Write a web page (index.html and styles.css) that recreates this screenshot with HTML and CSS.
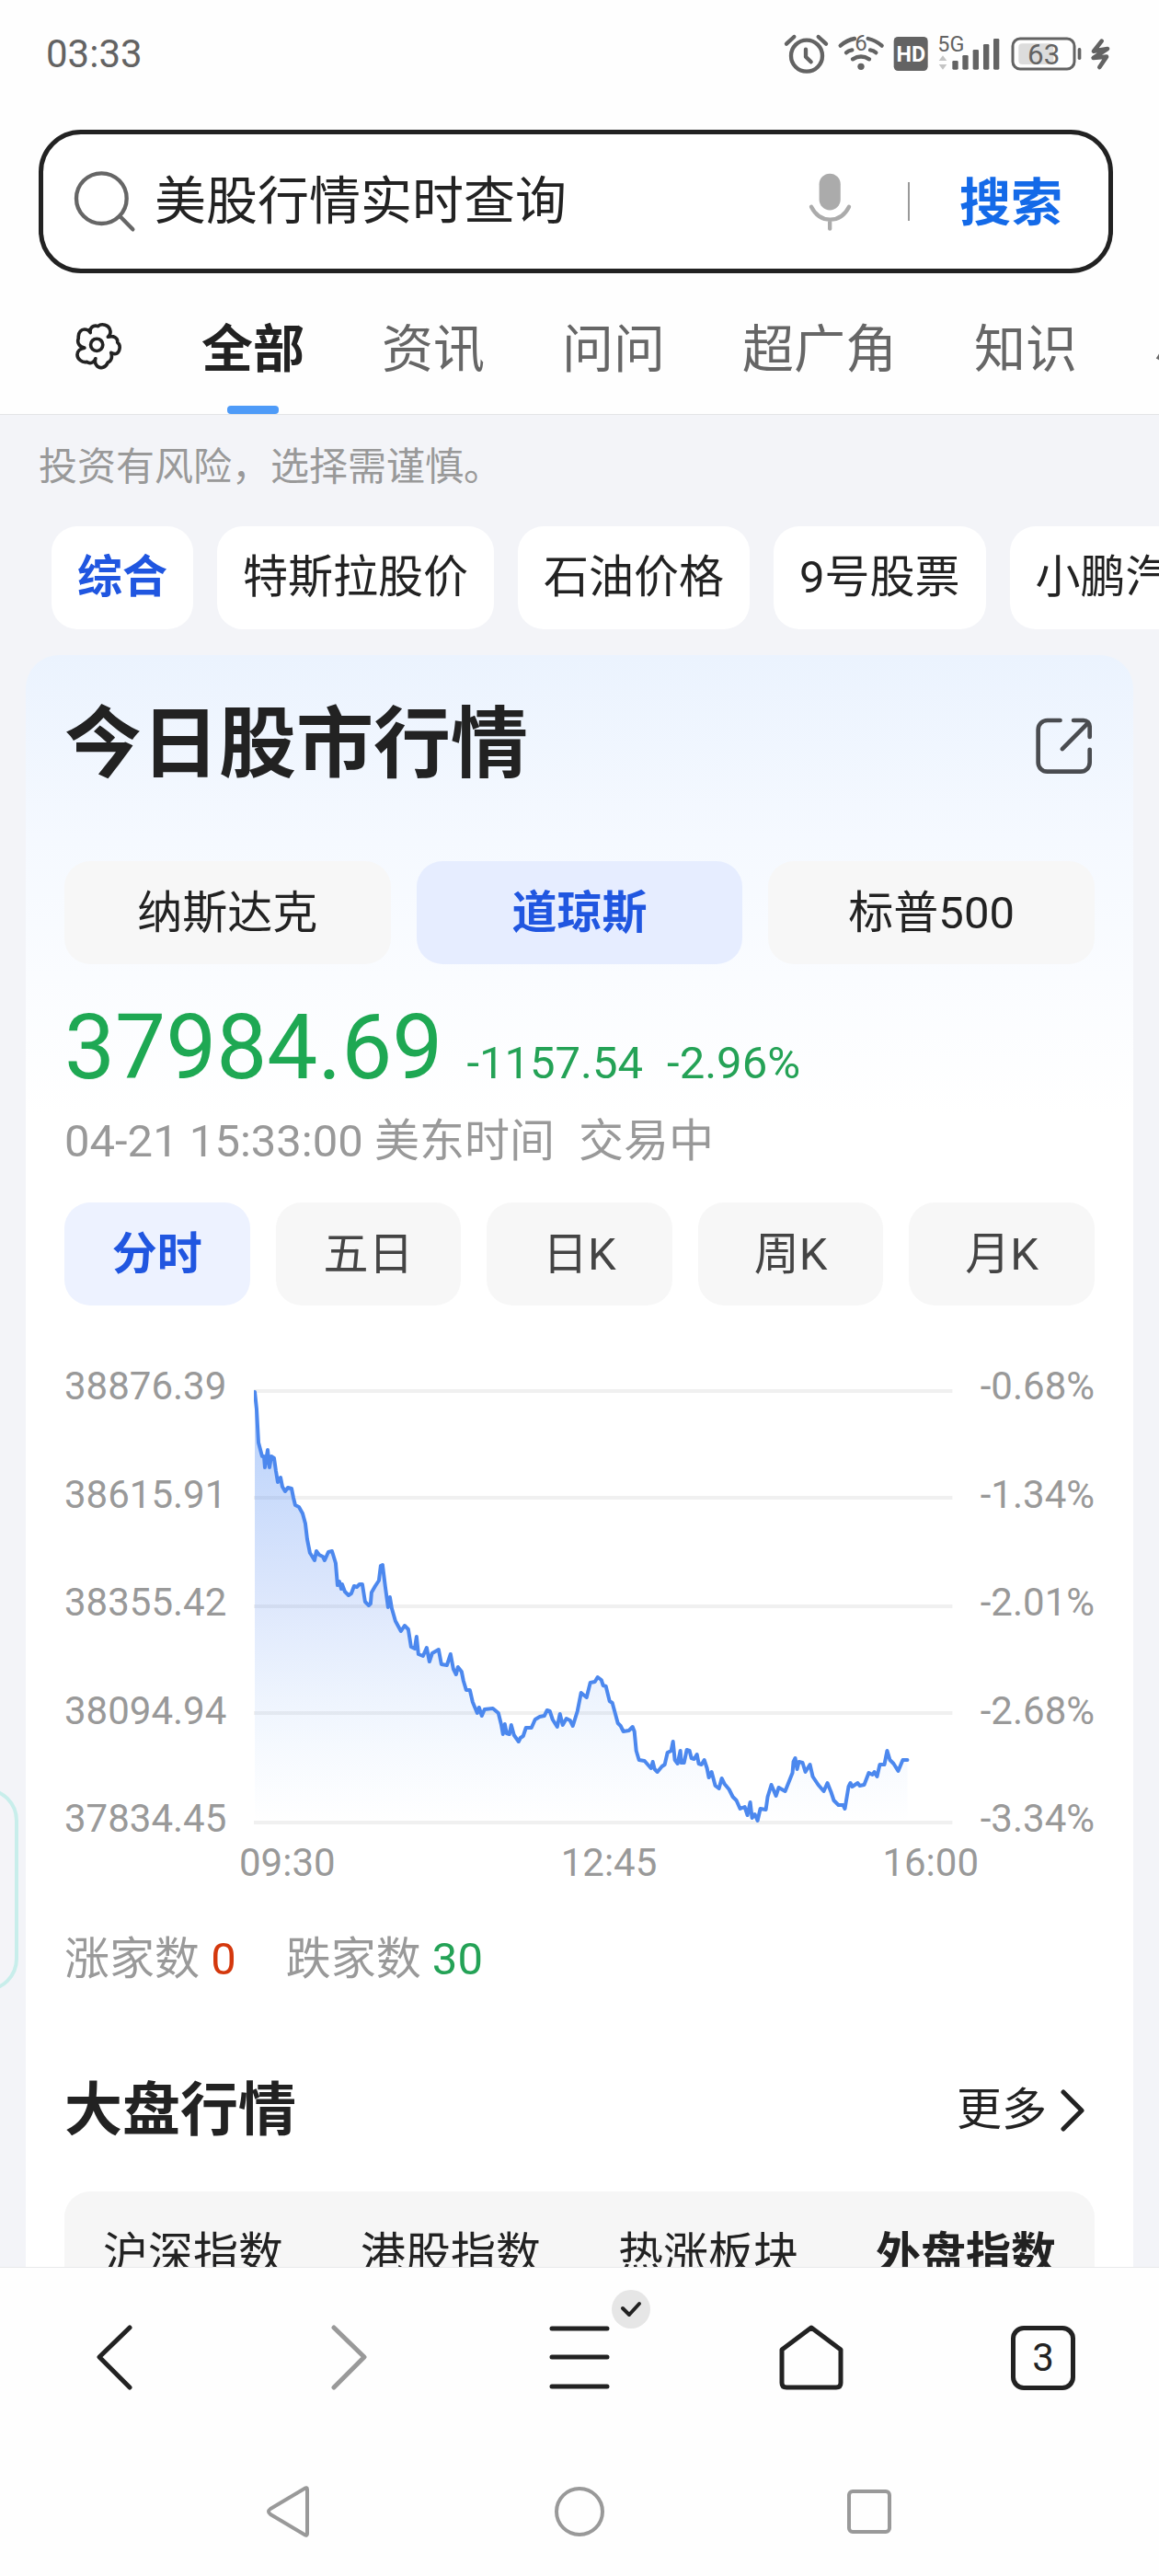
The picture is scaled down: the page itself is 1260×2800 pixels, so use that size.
FILE: index.html
```html
<!DOCTYPE html>
<html lang="zh-CN">
<head>
  <meta charset="UTF-8" />
  <title>美股行情实时查询</title>
  <meta name="viewport" content="width=device-width, initial-scale=1" />
  <link rel="stylesheet" href="styles.css">
</head>
<body>
  <!-- Status bar -->
  <div class="status-bar">
    <span class="clock">03:33</span>
    <div class="status-icons">
      <svg width="48" height="44" viewBox="108 48 144 132" fill="none" stroke="#636363" stroke-width="13" stroke-linecap="round" stroke-linejoin="round">
        <circle cx="180" cy="119" r="51" />
        <path d="M177 98v24l17 17M114 80l25-23M243 80l-25-23" />
      </svg>
      <svg width="50" height="44" viewBox="274 48 150 132" fill="none" stroke="#636363" stroke-width="13" stroke-linecap="round">
        <path d="M282 86Q304 67 328 63M372 63Q396 68 417 86M301 109Q308 102 320 100M379 100Q391 102 398 109M322 130Q349 113 376 130" />
        <circle cx="349" cy="154" r="11" fill="#636363" stroke="none" />
        <text x="349" y="103" font-size="72" fill="#636363" stroke="none" text-anchor="middle">6</text>
      </svg>
      <svg width="38" height="44" viewBox="457 48 114 132">
        <rect x="459" y="57" width="111" height="111" rx="14" fill="#636363" />
        <text x="515" y="137" font-size="70" font-weight="700" fill="#fff" text-anchor="middle">HD</text>
      </svg>
      <svg width="68" height="44" viewBox="608 48 204 132" fill="#636363">
        <text x="609" y="104" font-size="70">5G</text>
        <path d="M626 118l13 17h-26zM613 147h26l-13 17z" fill="#c4c4c4" />
        <rect x="657" y="135" width="19" height="29" rx="4" />
        <rect x="690" y="117" width="19" height="47" rx="4" />
        <rect x="724" y="99" width="19" height="65" rx="4" />
        <rect x="758" y="81" width="19" height="83" rx="4" />
        <rect x="791" y="63" width="19" height="101" rx="4" />
      </svg>
      <svg class="battery" width="77" height="44" viewBox="848 48 231 132">
        <rect x="854" y="63" width="201" height="99" rx="24" fill="none" stroke="#636363" stroke-width="9" />
        <rect x="873" y="79" width="114" height="68" rx="12" fill="#dcdcdc" />
        <rect x="1066" y="93" width="11" height="39" rx="5" fill="#636363" />
        <text x="955" y="148" font-size="94" fill="#636363" text-anchor="middle">63</text>
      </svg>
      <svg width="21" height="44" viewBox="1100 48 63 132" fill="none" stroke="#636363" stroke-width="14" stroke-linecap="round" stroke-linejoin="round">
        <path d="M1135 71l-26 33 45-8-46 30 43-4-23 34" />
      </svg>
    </div>
  </div>

  <!-- Search -->
  <form class="search-box">
    <svg class="search-icon" viewBox="120 168 204 204" fill="none" stroke="#666" stroke-width="13" stroke-linecap="round">
      <circle cx="211" cy="260" r="82" />
      <path d="M271 318l42 43" />
    </svg>
    <input class="search-input" type="text" value="美股行情实时查询" aria-label="搜索内容">
    <button class="mic-btn" type="button" aria-label="语音">
      <svg width="47" height="65" viewBox="86 172 142 196">
        <rect x="121" y="177" width="70" height="120" rx="35" fill="#ababab" />
        <path d="M95 286Q116 328 157 328T219 286M156 330v28" fill="none" stroke="#ababab" stroke-width="13" stroke-linecap="round" />
      </svg>
    </button>
    <span class="divider"></span>
    <button class="search-btn" type="button">搜索</button>
  </form>

  <!-- Category tabs -->
  <nav class="tabs">
    <button class="tab-settings" aria-label="设置">
      <svg width="53" height="53" viewBox="120 662 160 160" fill="none" stroke="#222" stroke-width="11" stroke-linejoin="round">
        <path d="M175 700C172 684 184 674 200 679C212 668 236 674 240 692C242 700 240 708 233 714C252 708 266 718 264 732C276 740 272 762 262 768C256 771 250 770 243 766C248 780 244 794 232 798C226 816 204 820 196 808C190 802 190 792 192 785C188 798 174 804 164 796C148 800 132 786 132 772C132 760 142 752 156 750C140 748 130 734 136 718C134 698 146 686 162 690C168 691 172 695 175 700Z" />
        <circle cx="196" cy="740" r="20" />
      </svg>
    </button>
    <a class="tab active" href="#">全部</a>
    <a class="tab" href="#">资讯</a>
    <a class="tab" href="#">问问</a>
    <a class="tab" href="#">超广角</a>
    <a class="tab" href="#">知识</a>
    <a class="tab" href="#">小说</a>
  </nav>

  <!-- Results -->
  <main class="results">
    <p class="notice">投资有风险，选择需谨慎。</p>

    <div class="chips">
      <button class="chip active">综合</button>
      <button class="chip">特斯拉股价</button>
      <button class="chip">石油价格</button>
      <button class="chip">9号股票</button>
      <button class="chip">小鹏汽车</button>
    </div>

    <section class="card">
      <header class="card-head">
        <h1>今日股市行情</h1>
        <button class="share-btn" aria-label="分享">
          <svg width="63" height="63" viewBox="105 110 190 190" fill="none" stroke="#4a4c50" stroke-width="14" stroke-linecap="round">
            <path d="M188 122H146a30 30 0 0 0-30 30V260a30 30 0 0 0 30 30H255a30 30 0 0 0 30-30V218M232 122H265a20 20 0 0 1 20 20V176M278 132L195 216" />
          </svg>
        </button>
      </header>

      <div class="markets">
        <button class="pill">纳斯达克</button>
        <button class="pill active">道琼斯</button>
        <button class="pill">标普500</button>
      </div>

      <div class="quote">
        <span class="price">37984.69</span>
        <span class="change">-1157.54</span>
        <span class="change">-2.96%</span>
      </div>
      <div class="quote-time">
        <span>04-21 15:33:00 美东时间</span>
        <span>交易中</span>
      </div>

      <div class="periods">
        <button class="pill active">分时</button>
        <button class="pill">五日</button>
        <button class="pill">日K</button>
        <button class="pill">周K</button>
        <button class="pill">月K</button>
      </div>

      <div class="chart">
        <div class="axis-y">
          <span>38876.39</span>
          <span>38615.91</span>
          <span>38355.42</span>
          <span>38094.94</span>
          <span>37834.45</span>
        </div>
        <svg class="plot" viewBox="0 0 760 476" preserveAspectRatio="none">
          <defs>
            <linearGradient id="fade" x1="0" y1="0" x2="0" y2="1">
              <stop offset="0" stop-color="#4a8cf5" stop-opacity="0.4" />
              <stop offset="0.5" stop-color="#4a80f0" stop-opacity="0.18" />
              <stop offset="0.82" stop-color="#5a9bf5" stop-opacity="0.06" />
              <stop offset="1" stop-color="#5a9bf5" stop-opacity="0" />
            </linearGradient>
          </defs>
          <path d="M0 2H760M0 118H760M0 236H760M0 352H760M0 471H760" stroke="#f0f0f0" stroke-width="4" />
          <path id="area" fill="url(#fade)" />
          <path id="line" fill="none" stroke="#4c88ee" stroke-width="4" stroke-linejoin="round" stroke-linecap="round" />
        </svg>
        <div class="axis-y">
          <span>-0.68%</span>
          <span>-1.34%</span>
          <span>-2.01%</span>
          <span>-2.68%</span>
          <span>-3.34%</span>
        </div>
      </div>
      <div class="axis-x">
        <span>09:30</span>
        <span>12:45</span>
        <span>16:00</span>
      </div>

      <div class="counts">
        <span>涨家数 <b class="up">0</b></span>
        <span>跌家数 <b class="down">30</b></span>
      </div>

      <header class="sub-head">
        <h2>大盘行情</h2>
        <a class="more" href="#">更多
          <svg width="28" height="48" viewBox="0 0 28 48" fill="none" stroke="#222" stroke-width="5" stroke-linecap="round" stroke-linejoin="round">
            <path d="M4 4l20 20L4 44" />
          </svg>
        </a>
      </header>

      <div class="boards">
        <button class="board">沪深指数</button>
        <button class="board">港股指数</button>
        <button class="board">热涨板块</button>
        <button class="board active">外盘指数</button>
      </div>
    </section>

    <div class="side-handle"></div>
  </main>

  <!-- Browser toolbar -->
  <nav class="toolbar">
    <button aria-label="后退">
      <svg width="72" height="72" viewBox="0 0 72 72" fill="none" stroke="#222" stroke-width="5" stroke-linecap="round" stroke-linejoin="round"><path d="M51 3L18 35l33 33" /></svg>
    </button>
    <button aria-label="前进">
      <svg width="72" height="72" viewBox="0 0 72 72" fill="none" stroke="#999" stroke-width="5" stroke-linecap="round" stroke-linejoin="round"><path d="M21 3l33 32-33 33" /></svg>
    </button>
    <button class="menu-btn" aria-label="菜单">
      <svg width="72" height="72" viewBox="0 0 72 72" fill="none" stroke="#222" stroke-width="5" stroke-linecap="round"><path d="M6 4h60M6 35h60M6 67h60" /></svg>
      <span class="badge">
        <svg width="24" height="20" viewBox="0 0 24 20" fill="none" stroke="#222" stroke-width="4" stroke-linecap="round" stroke-linejoin="round"><path d="M3 9l7 7L21 4" /></svg>
      </span>
    </button>
    <button aria-label="主页">
      <svg width="72" height="72" viewBox="0 0 72 72" fill="none" stroke="#222" stroke-width="5" stroke-linejoin="round"><path d="M36 3L4 27v36q0 5 5 5h54q5 0 5-5V27z" /></svg>
    </button>
    <button aria-label="标签页"><span class="tab-count">3</span></button>
  </nav>

  <!-- System navigation -->
  <nav class="sys-nav">
    <button aria-label="返回">
      <svg width="56" height="56" viewBox="0 0 56 56" fill="none" stroke="#999" stroke-width="4" stroke-linejoin="round"><path d="M47 4v48q0 3-3 1L7 31q-4-3 0-6L44 3q3-2 3 1z" /></svg>
    </button>
    <button aria-label="桌面">
      <svg width="56" height="56" viewBox="0 0 56 56" fill="none" stroke="#999" stroke-width="4"><circle cx="28" cy="28" r="25" /></svg>
    </button>
    <button aria-label="最近任务">
      <svg width="56" height="56" viewBox="0 0 56 56" fill="none" stroke="#999" stroke-width="4"><rect x="6" y="6" width="44" height="44" rx="4" /></svg>
    </button>
  </nav>

  <script>
    // x,y pairs of the intraday curve, in plot units
    const points = [
      "1,3 3,22 5,58 9,73 11,73 12,85 15,66 17,85 19,73 22,75 24,89 26,101 29,96 31,106 34,111 37,107 41,108",
      "43,118 45,126 49,128 53,135 56,146 58,163 61,178 63,181 66,186 68,176 71,180 75,182 77,186 81,177 85,176",
      "89,189 91,213 93,209 95,217 96,212 99,220 103,224 106,222 109,214 112,215 115,212 118,212 121,231 125,235",
      "127,233 128,221 132,214 136,208 138,192 140,191 143,215 146,237 148,226 150,238 154,252 160,263 164,257",
      "168,261 171,280 175,282 177,269 179,288 184,290 188,281 191,296 194,287 201,283 204,299 210,300 214,288",
      "217,304 220,310 222,302 226,307 228,317 231,327 235,327 238,340 243,352 245,346 248,355 251,348 260,347",
      "266,352 269,364 271,375 273,364 275,374 278,375 280,365 283,376 288,383 290,379 293,377 296,368 302,368",
      "306,359 311,356 316,355 319,349 322,350 325,359 330,367 333,353 336,365 340,358 344,360 347,366 352,350",
      "356,330 362,335 366,319 371,318 374,313 378,316 380,322 383,323 387,339 390,341 396,363 399,366 402,372",
      "408,371 412,367 414,372 416,393 419,403 425,404 432,412 434,405 436,413 439,416 444,410 447,408 450,395",
      "454,393 456,383 458,403 461,407 464,393 465,406 468,406 471,392 474,393 476,401 479,402 482,397 484,407",
      "487,408 490,403 493,412 495,422 498,416 502,431 506,434 509,423 512,429 517,435 521,443 525,447 529,456",
      "534,454 537,463 540,449 542,466 545,462 548,469 551,456 557,457 559,443 563,430 568,442 571,433 578,437",
      "582,427 586,417 587,405 589,401 591,413 593,405 597,406 600,416 605,408 608,421 614,430 620,437 624,428",
      "628,438 631,447 636,452 641,452 643,456 647,432 649,428 651,432 657,428 659,431 664,430 669,417 673,419",
      "675,416 678,421 681,408 686,408 689,393 692,403 696,407 701,415 706,403 711,403"
    ].join(" ");

    document.getElementById("line").setAttribute("d", "M" + points);
    document.getElementById("area").setAttribute("d", "M" + points + " V471 H1 Z");
  </script>
</body>
</html>
```
FILE: styles.css
```css
* {
  box-sizing: border-box;
}

body {
  margin: 0;
  height: 100vh;
  display: flex;
  flex-direction: column;
  overflow: hidden;
  background: #fefefe;
  color: #222;
  font-family: Roboto, "Noto Sans CJK SC", sans-serif;
  font-size: 49px;
  line-height: 60px;
}

button {
  padding: 0;
  border: none;
  background: none;
  color: inherit;
  font: inherit;
  cursor: pointer;
}

a {
  color: inherit;
  text-decoration: none;
}

svg {
  display: block;
}

h1, h2, p {
  margin: 0;
}

/* status bar */
.status-bar {
  flex: none;
  height: 116px;
  padding: 2px 53px 0 50px;
  display: flex;
  align-items: center;
  justify-content: space-between;
}

.clock {
  font-size: 42px;
  color: #636363;
}

.status-icons {
  display: flex;
  gap: 10px;
}

.status-icons svg {
  overflow: visible;
}

.battery {
  margin-left: 2px;
}

/* search */
.search-box {
  flex: none;
  margin: 25px 50px 0 42px;
  height: 156px;
  padding: 0 50px 0 33px;
  display: flex;
  align-items: center;
  border: 5px solid #222;
  border-radius: 46px;
  background: #fff;
}

.search-icon {
  flex: none;
  width: 68px;
  height: 68px;
}

.search-input {
  flex: 1;
  min-width: 0;
  margin-left: 20px;
  padding: 0;
  border: none;
  outline: none;
  background: none;
  color: #222;
  font: inherit;
  font-size: 56px;
  line-height: 80px;
}

.divider {
  width: 2px;
  height: 42px;
  margin: 0 54px 0 61px;
  background: #999;
}

.search-btn {
  padding-top: 4px;
  color: #146ae8;
  font-size: 56px;
  font-weight: 700;
  line-height: 80px;
}

/* tabs */
.tabs {
  flex: none;
  height: 154px;
  padding-left: 80px;
  display: flex;
  align-items: center;
  gap: 84px;
  overflow: hidden;
  border-bottom: 1px solid #e3e4e6;
  white-space: nowrap;
}

.tab {
  position: relative;
  flex: none;
  padding: 43px 0 30px;
  color: #666;
  font-size: 56px;
  line-height: 80px;
}

.tab-settings {
  padding-top: 4px;
}

.tab-settings + .tab {
  margin-left: 2px;
}

.tab.active {
  color: #222;
  font-weight: 700;
}

.tab.active::after {
  content: "";
  position: absolute;
  left: 50%;
  bottom: 0;
  width: 56px;
  height: 9px;
  margin-left: -28px;
  border-radius: 4px;
  background: #4e9bf8;
}

/* results */
.results {
  position: relative;
  flex: 1;
  min-height: 0;
  overflow: hidden;
  padding: 33px 28px 0;
  background: #f3f4f8;
}

.notice {
  padding-left: 14px;
  color: #999;
  font-size: 42px;
  line-height: 48px;
}

.chips {
  margin: 40px -28px 28px 0;
  padding-left: 28px;
  display: flex;
  gap: 26px;
  overflow: hidden;
}

.chip {
  flex: none;
  height: 112px;
  padding: 0 28px;
  border-radius: 28px;
  background: #fff;
}

.chip.active {
  color: #2056e0;
  font-weight: 700;
}

/* card */
.card {
  padding: 46px 42px 60px;
  border-radius: 36px;
  background: linear-gradient(#ebf3fe, #f5f9ff 200px, #fff 500px);
}

.card-head, .sub-head {
  display: flex;
  align-items: center;
  justify-content: space-between;
}

.card-head h1 {
  font-size: 84px;
  line-height: 104px;
}

.share-btn {
  padding-right: 2px;
}

.markets, .periods {
  display: flex;
  gap: 28px;
}

.markets {
  margin-top: 74px;
}

.periods {
  margin-top: 36px;
}

.pill {
  flex: 1;
  height: 112px;
  padding-top: 2px;
  border-radius: 28px;
  background: #f7f7f7;
}

.pill.active {
  background: #e6edff;
  color: #2056e0;
  font-weight: 700;
}

.periods .pill {
  color: #444;
}

.periods .pill.active {
  background: #edf2ff;
  color: #2056e0;
}

.quote {
  margin-top: 31px;
  display: flex;
  align-items: baseline;
  gap: 26px;
  color: #1ea853;
}

.price {
  font-size: 98px;
  line-height: 120px;
}

.change {
  color: #24a256;
}

.quote-time {
  margin-top: 12px;
  display: flex;
  gap: 26px;
  color: #999;
}

/* chart */
.chart {
  margin-top: 64px;
  display: flex;
  gap: 30px;
  color: #999;
  font-size: 42px;
  line-height: 48px;
}

.axis-y {
  flex: none;
  height: 518px;
  display: flex;
  flex-direction: column;
  justify-content: space-between;
}

.plot {
  flex: 1;
  min-width: 0;
  height: 476px;
  margin-top: 27px;
}

.axis-x {
  padding: 0 126px 0 190px;
  display: flex;
  justify-content: space-between;
  color: #999;
  font-size: 42px;
  line-height: 48px;
}

.counts {
  margin-top: 51px;
  display: flex;
  gap: 54px;
  color: #999;
}

.counts b {
  font-weight: 400;
}

.up {
  color: #d4380d;
}

.down {
  color: #24a256;
}

/* index boards */
.sub-head {
  margin-top: 94px;
}

.sub-head h2 {
  font-size: 63px;
  line-height: 80px;
}

.more {
  display: flex;
  align-items: center;
  gap: 14px;
  padding-right: 10px;
}

.boards {
  margin-top: 48px;
  padding: 39px 0 37px;
  display: flex;
  border-radius: 28px;
  background: #f6f6f6;
}

.board {
  flex: 1;
}

.board.active {
  font-weight: 700;
}

.side-handle {
  position: absolute;
  left: -60px;
  top: 1492px;
  width: 80px;
  height: 222px;
  border: 4px solid #c8eeeb;
  border-radius: 36px;
  background: #f4f4f8;
}

/* bottom bars */
.toolbar, .sys-nav {
  flex: none;
  display: flex;
  background: #fefefe;
}

.toolbar {
  height: 196px;
  border-top: 1px solid #e8e9eb;
}

.toolbar button, .sys-nav button {
  flex: 1;
  display: flex;
  align-items: center;
  justify-content: center;
}

.menu-btn {
  position: relative;
}

.badge {
  position: absolute;
  left: 50%;
  top: 24px;
  width: 42px;
  height: 42px;
  margin-left: 35px;
  display: flex;
  align-items: center;
  justify-content: center;
  border-radius: 50%;
  background: #e6e6e6;
}

.tab-count {
  width: 70px;
  height: 70px;
  border: 5px solid #222;
  border-radius: 14px;
  font-size: 42px;
  line-height: 60px;
}

.sys-nav {
  height: 140px;
  padding: 0 12.5%;
}
```
